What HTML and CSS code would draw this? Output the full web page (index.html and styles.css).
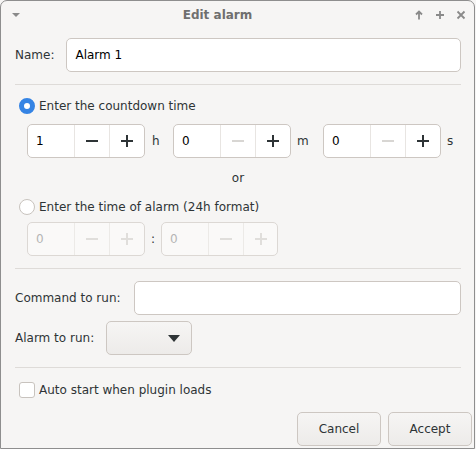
FILE: index.html
```html
<!DOCTYPE html>
<html>
<head>
<meta charset="utf-8">
<link rel="stylesheet" href="styles.css">
</head>
<body>
<div class="window">
  <div class="titlebar">
    <svg class="tb-menu" width="10" height="6" viewBox="0 0 10 6"><path d="M1 1h8L5 5z" fill="#8a8a8a"/></svg>
    <div class="title">Edit alarm</div>
    <div class="tb-buttons">
      <svg width="10" height="10" viewBox="0 0 10 10"><path d="M5 1.5v8M2 4.5l3-3 3 3" stroke="#8a8a8a" stroke-width="1.8" fill="none"/></svg>
      <svg width="10" height="10" viewBox="0 0 10 10"><path d="M5 1v8M1 5h8" stroke="#8a8a8a" stroke-width="1.8" fill="none"/></svg>
      <svg width="10" height="10" viewBox="0 0 10 10"><path d="M1.5 1.5l7 7M8.5 1.5l-7 7" stroke="#8a8a8a" stroke-width="1.8" fill="none"/></svg>
    </div>
  </div>
  <div class="content">
    <div class="row name-row">
      <span class="label">Name:</span>
      <div class="entry grow">Alarm 1</div>
    </div>
    <div class="sep sep1"></div>

    <div class="radio-row r1">
      <span class="radio on"></span><span>Enter the countdown time</span>
    </div>
    <div class="spin-row s1">
      <div class="spin">
        <div class="spin-val">1</div>
        <div class="spin-btn"><svg width="12" height="12" viewBox="0 0 12 12"><path d="M0 6h12" stroke="#2e3436" stroke-width="2"/></svg></div>
        <div class="spin-btn"><svg width="12" height="12" viewBox="0 0 12 12"><path d="M0 6h12M6 0v12" stroke="#2e3436" stroke-width="2"/></svg></div>
      </div>
      <span class="unit">h</span>
      <div class="spin">
        <div class="spin-val">0</div>
        <div class="spin-btn"><svg width="12" height="12" viewBox="0 0 12 12"><path d="M0 6h12" stroke="#d8d6d3" stroke-width="2"/></svg></div>
        <div class="spin-btn"><svg width="12" height="12" viewBox="0 0 12 12"><path d="M0 6h12M6 0v12" stroke="#2e3436" stroke-width="2"/></svg></div>
      </div>
      <span class="unit unit-m">m</span>
      <div class="spin">
        <div class="spin-val">0</div>
        <div class="spin-btn"><svg width="12" height="12" viewBox="0 0 12 12"><path d="M0 6h12" stroke="#d8d6d3" stroke-width="2"/></svg></div>
        <div class="spin-btn"><svg width="12" height="12" viewBox="0 0 12 12"><path d="M0 6h12M6 0v12" stroke="#2e3436" stroke-width="2"/></svg></div>
      </div>
      <span class="unit unit-s">s</span>
    </div>
    <div class="or">or</div>
    <div class="radio-row r2">
      <span class="radio"></span><span>Enter the time of alarm (24h format)</span>
    </div>
    <div class="spin-row s2">
      <div class="spin disabled">
        <div class="spin-val">0</div>
        <div class="spin-btn"><svg width="12" height="12" viewBox="0 0 12 12"><path d="M0 6h12" stroke="#e0dedb" stroke-width="2"/></svg></div>
        <div class="spin-btn"><svg width="12" height="12" viewBox="0 0 12 12"><path d="M0 6h12M6 0v12" stroke="#e0dedb" stroke-width="2"/></svg></div>
      </div>
      <span class="colon">:</span>
      <div class="spin disabled short">
        <div class="spin-val">0</div>
        <div class="spin-btn"><svg width="12" height="12" viewBox="0 0 12 12"><path d="M0 6h12" stroke="#e0dedb" stroke-width="2"/></svg></div>
        <div class="spin-btn"><svg width="12" height="12" viewBox="0 0 12 12"><path d="M0 6h12M6 0v12" stroke="#e0dedb" stroke-width="2"/></svg></div>
      </div>
    </div>
    <div class="sep sep2"></div>

    <div class="row cmd-row">
      <span class="label">Command to run:</span>
      <div class="entry grow"></div>
    </div>
    <div class="row alarm-row">
      <span class="label">Alarm to run:</span>
      <div class="combo"><svg width="12" height="7" viewBox="0 0 12 7"><path d="M0 0h12L6 7z" fill="#2e3436"/></svg></div>
    </div>
    <div class="sep sep3"></div>

    <div class="radio-row c1">
      <span class="check"></span><span>Auto start when plugin loads</span>
    </div>
    <div class="actions">
      <div class="button">Cancel</div>
      <div class="button">Accept</div>
    </div>
  </div>
</div>
</body>
</html>
```
FILE: styles.css
```css
* { box-sizing: border-box; }
html, body { margin: 0; padding: 0; background: #f6f5f4; }
body {
  font-family: "DejaVu Sans", sans-serif;
  font-size: 12px;
  color: #2e3436;
}
.window {
  width: 475px;
  height: 449px;
  border: 1px solid #8e8e8e;
  border-radius: 7px 7px 0 0;
  background: #f6f5f4;
  overflow: hidden;
}
.titlebar {
  height: 27px;
  display: flex;
  align-items: center;
  padding: 0 8px 0 10px;
}
.title {
  flex: 1;
  text-align: center;
  font-weight: bold;
  color: #6f6f6f;
  font-size: 12px;
}
.tb-buttons { display: flex; gap: 11px; align-items: center; }
.content {
  padding: 0 13px 0 14px;
}
.row { display: flex; align-items: center; }
.label { margin-right: 12px; flex-shrink: 0; }
.name-row { margin-top: 10px; }
.entry {
  height: 34px;
  background: #fff;
  border: 1px solid #cdc7c2;
  border-radius: 5px;
  display: flex;
  align-items: center;
  padding-left: 8px;
  color: #000;
}
.grow { flex: 1; }
.sep { height: 1px; background: #dedbd8; }
.sep1 { margin-top: 12px; }
.radio-row { display: flex; align-items: center; margin-left: 4px; }
.r1 { margin-top: 13px; }
.radio {
  width: 16px; height: 16px; border-radius: 50%;
  border: 1px solid #c8c3be; background: #fff;
  margin-right: 4px; display: inline-block; flex-shrink: 0;
}
.radio.on {
  border: 5px solid #3584e4;
  background: #fff;
}
.spin-row { display: flex; align-items: center; margin-left: 12px; }
.s1 { margin-top: 10px; }
.spin {
  display: flex; height: 34px; width: 118px; flex-shrink: 0;
  border: 1px solid #cdc7c2; border-radius: 5px; background: #fff;
  overflow: hidden;
}
.spin.short { width: 117px; }
.spin-val { width: 46px; flex-shrink: 0; display: flex; align-items: center; padding-left: 8px; color: #000; }
.spin-btn {
  width: 35px; flex-shrink: 0; border-left: 1px solid #e8e5e2;
  display: flex; align-items: center; justify-content: center;
}
.spin-btn:last-child { width: 36px; flex: 1; }
.unit { width: 28px; padding-left: 7px; flex-shrink: 0; }
.unit-m { width: 32px; padding-left: 6px; }
.unit-s { width: auto; padding-left: 6px; }
.or { text-align: center; margin-top: 12px; height: 16px; line-height: 16px; }
.r2 { margin-top: 13px; }
.s2 { margin-top: 7px; }
.spin.disabled { background: #faf9f8; border-color: #dcd8d4; }
.spin.disabled .spin-val { color: #b5b5b5; }
.spin.disabled .spin-btn { border-left-color: #eceae7; }
.colon { width: 16px; text-align: center; flex-shrink: 0; }
.sep2 { margin-top: 12px; }
.cmd-row { margin-top: 12px; }
.cmd-row .label { margin-right: 13px; }
.alarm-row { margin-top: 6px; }
.combo {
  width: 86px; height: 34px;
  border: 1px solid #cdc7c2; border-radius: 5px;
  background: linear-gradient(#f6f5f4, #edebe9);
  display: flex; align-items: center; justify-content: flex-end;
  padding-right: 11px;
}
.sep3 { margin-top: 12px; }
.c1 { margin-top: 14px; }
.check {
  width: 16px; height: 16px; border-radius: 3px;
  border: 1px solid #c8c3be; background: #fff;
  margin-right: 4px; display: inline-block; flex-shrink: 0;
}
.actions { display: flex; justify-content: flex-end; gap: 7px; margin-top: 14px; margin-right: -11px; }
.button {
  width: 84px; height: 34px;
  border: 1px solid #cdc7c2; border-radius: 5px;
  background: linear-gradient(#f6f5f4, #edebe9);
  display: flex; align-items: center; justify-content: center;
}
```
